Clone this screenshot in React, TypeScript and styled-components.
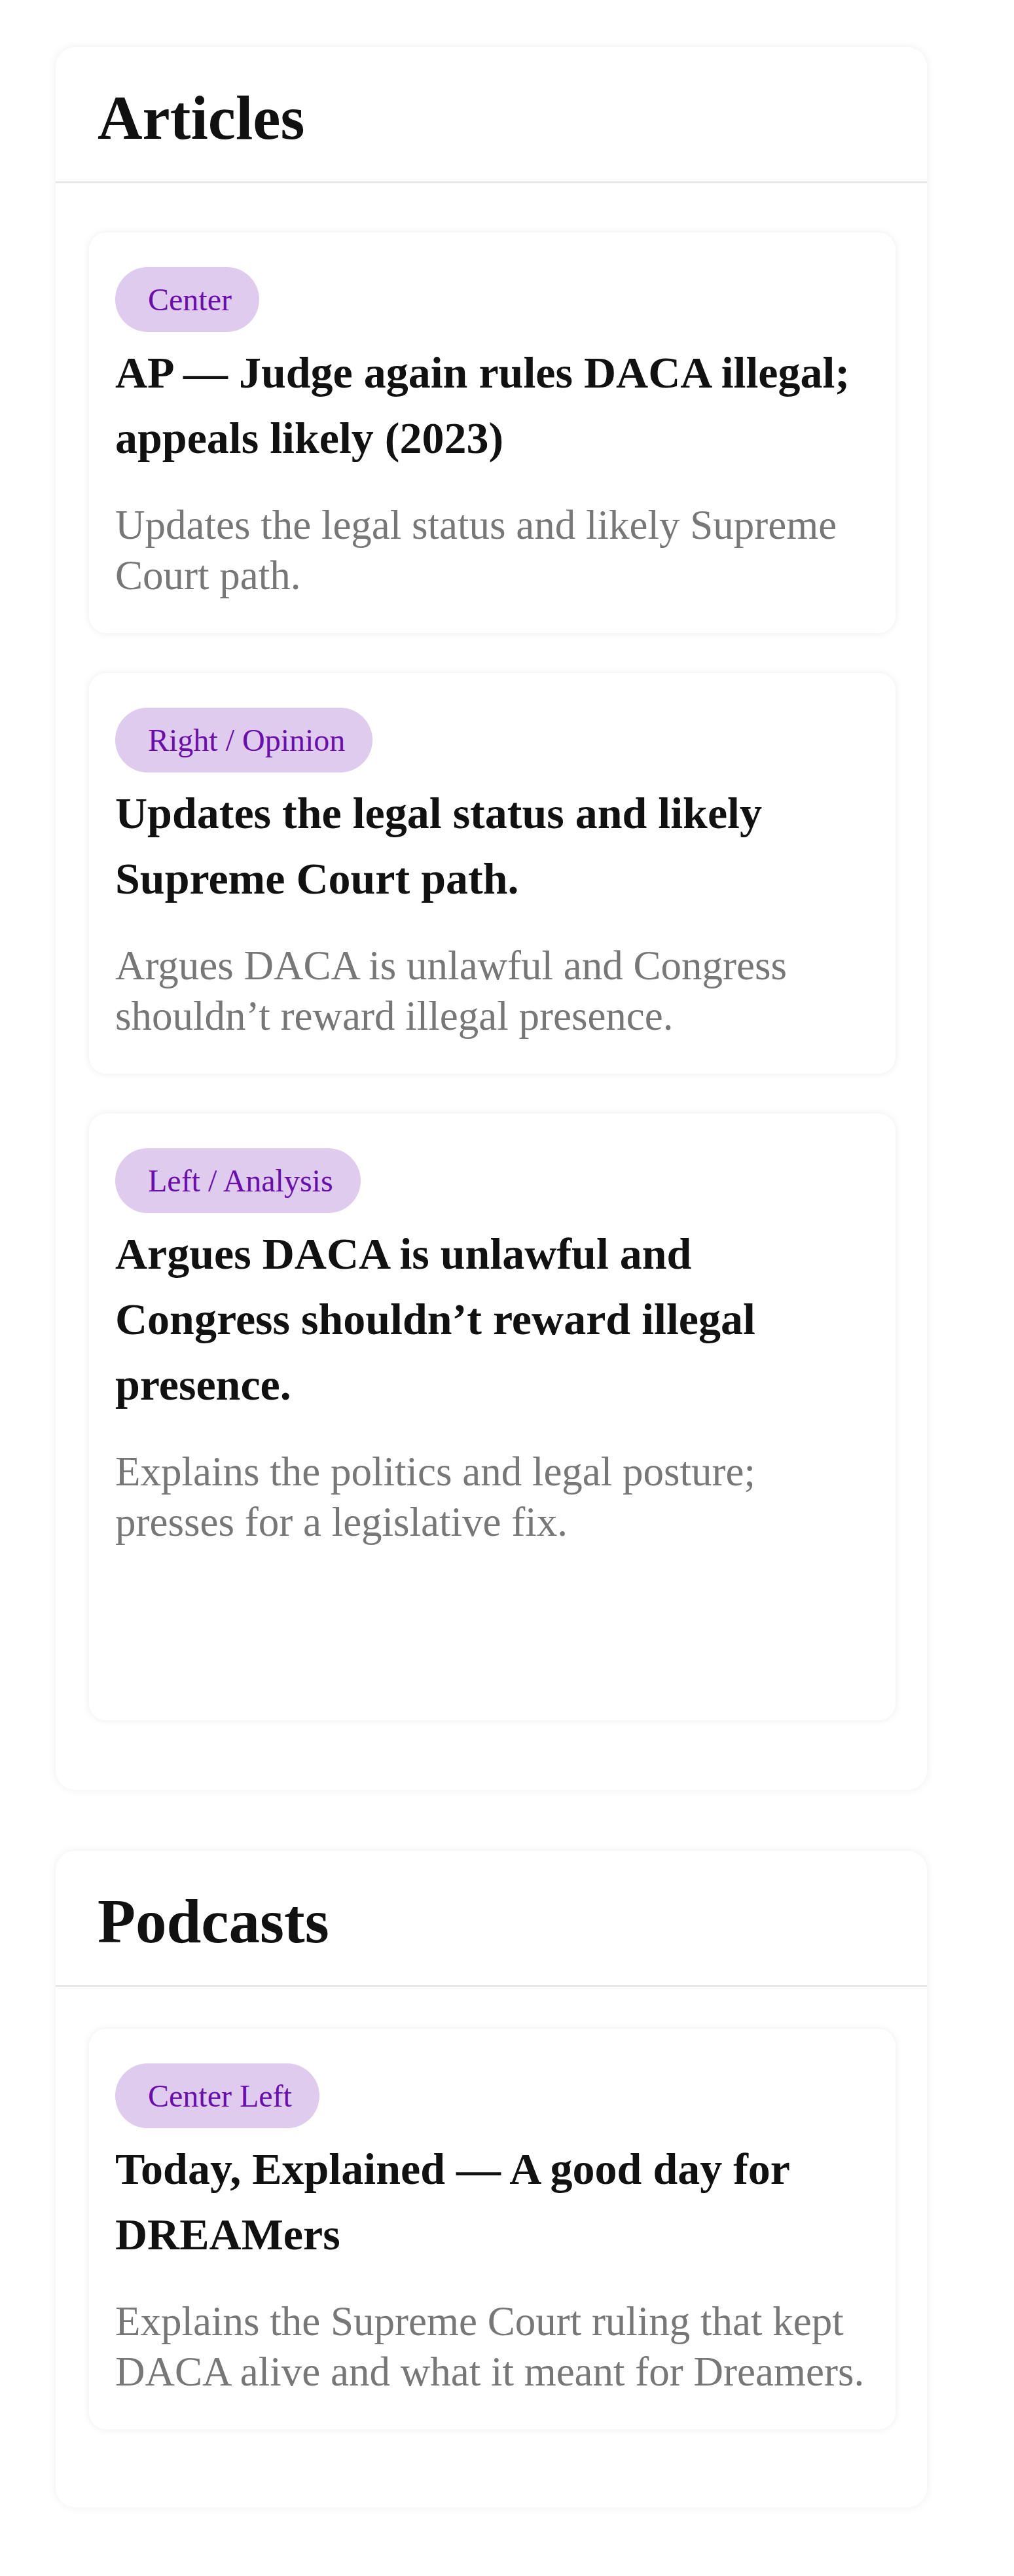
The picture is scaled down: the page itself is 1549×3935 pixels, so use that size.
import React from 'react';
import styled, { createGlobalStyle } from 'styled-components';

interface Item {
  id: string;
  lean: string;
  title: string;
  summary: string;
  minHeight?: number;
}

interface Section {
  id: string;
  heading: string;
  padTop: number;
  padBottom: number;
  items: Item[];
}

const sections: Section[] = [
  {
    id: 'articles',
    heading: 'Articles',
    padTop: 75,
    padBottom: 106,
    items: [
      {
        id: 'ap',
        lean: 'Center',
        title: 'AP — Judge again rules DACA illegal; appeals likely (2023)',
        summary: 'Updates the legal status and likely Supreme Court path.',
      },
      {
        id: 'right',
        lean: 'Right / Opinion',
        title: 'Updates the legal status and likely Supreme Court path.',
        summary: 'Argues DACA is unlawful and Congress shouldn’t reward illegal presence.',
      },
      {
        id: 'left',
        lean: 'Left / Analysis',
        title: 'Argues DACA is unlawful and Congress shouldn’t reward illegal presence.',
        summary: 'Explains the politics and legal posture; presses for a legislative fix.',
        minHeight: 927,
      },
    ],
  },
  {
    id: 'podcasts',
    heading: 'Podcasts',
    padTop: 64,
    padBottom: 119,
    items: [
      {
        id: 'today',
        lean: 'Center Left',
        title: 'Today, Explained — A good day for DREAMers',
        summary: 'Explains the Supreme Court ruling that kept DACA alive and what it meant for Dreamers.',
      },
    ],
  },
];

const App: React.FC = () => {
  return (
    <>
      <GlobalStyle />
      <Page>
        {sections.map((section) => (
          <Panel key={section.id}>
            <PanelHeader>
              <PanelTitle>{section.heading}</PanelTitle>
            </PanelHeader>
            <PanelBody $padTop={section.padTop} $padBottom={section.padBottom}>
              {section.items.map((item) => (
                <Card key={item.id} $minHeight={item.minHeight}>
                  <LeanBadge>{item.lean}</LeanBadge>
                  <CardTitle>{item.title}</CardTitle>
                  <CardSummary>{item.summary}</CardSummary>
                </Card>
              ))}
            </PanelBody>
          </Panel>
        ))}
      </Page>
    </>
  );
};

const GlobalStyle = createGlobalStyle`
  html, body {
    margin: 0;
    padding: 0;
    background: #ffffff;
  }

  body {
    font-family: 'Liberation Serif', 'Times New Roman', serif;
    color: #111111;
  }
`;

const Page = styled.div`
  display: flex;
  flex-direction: column;
  gap: 93px;
  padding: 72px 0 104px 85px;
`;

const Panel = styled.section`
  width: 1331px;
  background: #ffffff;
  border-radius: 30px;
  box-shadow: 0 0 14px rgba(0, 0, 0, 0.07);
`;

const PanelHeader = styled.header`
  padding: 53px 64px 42px;
  border-bottom: 3px solid #e6e6e6;
`;

const PanelTitle = styled.h2`
  margin: 0;
  font-family: 'Liberation Serif', 'Times New Roman', serif;
  font-weight: 700;
  font-size: 95px;
  line-height: 110px;
  color: #111111;
`;

const PanelBody = styled.div<{ $padTop: number; $padBottom: number }>`
  display: flex;
  flex-direction: column;
  gap: 61px;
  padding: ${({ $padTop }) => $padTop}px 48px ${({ $padBottom }) => $padBottom}px 51px;
`;

const Card = styled.article<{ $minHeight?: number }>`
  display: flex;
  flex-direction: column;
  align-items: flex-start;
  box-sizing: border-box;
  min-height: ${({ $minHeight }) => ($minHeight ? `${$minHeight}px` : 'auto')};
  padding: 53px 40px 49px;
  background: #ffffff;
  border-radius: 26px;
  box-shadow: 0 0 12px rgba(0, 0, 0, 0.08);
`;

const LeanBadge = styled.span`
  display: inline-block;
  height: 99px;
  padding: 0 42px 0 50px;
  border-radius: 999px;
  background: #dfcbee;
  color: #6a0dad;
  font-family: 'Liberation Serif', 'Times New Roman', serif;
  font-size: 48px;
  line-height: 99px;
  white-space: nowrap;
`;

const CardTitle = styled.h3`
  margin: 12px 0 0;
  font-family: 'Liberation Serif', 'Times New Roman', serif;
  font-weight: 700;
  font-size: 68px;
  line-height: 100px;
  color: #111111;
`;

const CardSummary = styled.p`
  margin: 45px 0 0;
  font-family: 'Liberation Serif', 'Times New Roman', serif;
  font-weight: 400;
  font-size: 63px;
  line-height: 77px;
  color: #777777;
`;

export default App;
